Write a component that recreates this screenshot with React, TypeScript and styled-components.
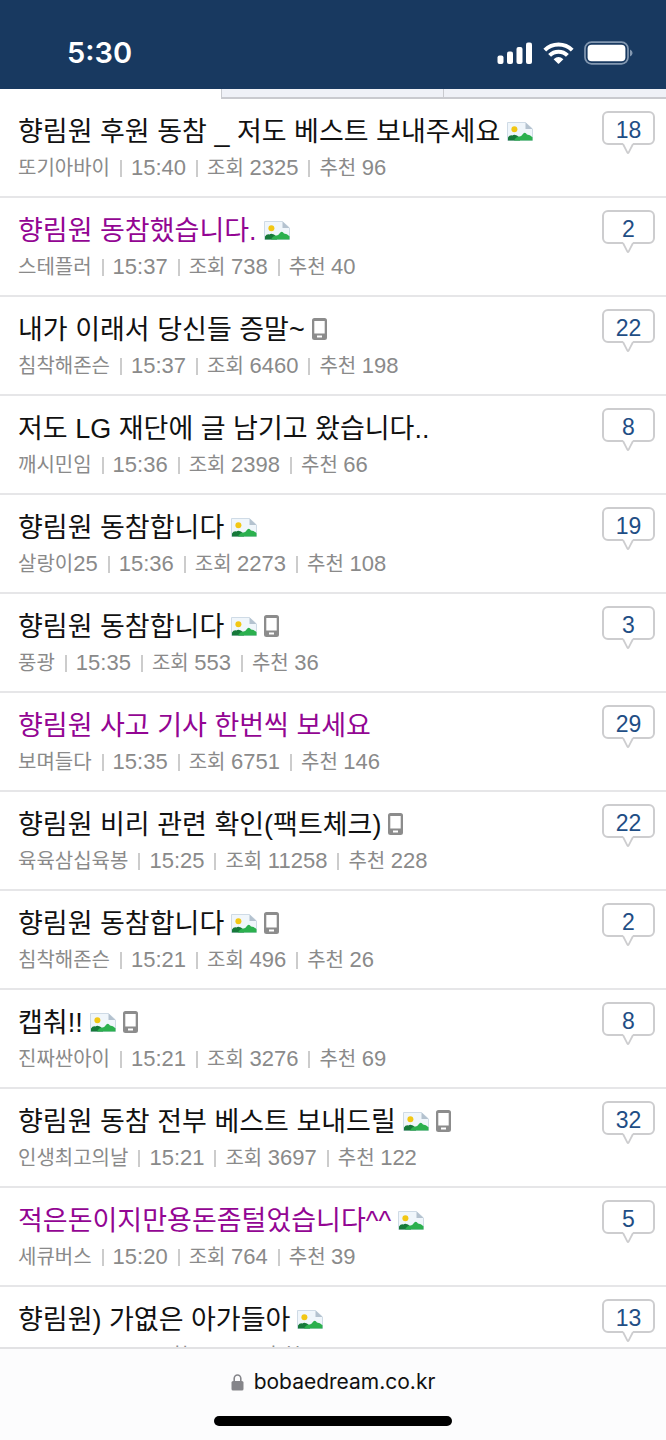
import React from "react";
import styled, { createGlobalStyle } from "styled-components";

const GlobalStyle = createGlobalStyle`
  * { box-sizing: border-box; }
  body {
    margin: 0;
    background: #fff;
    font-family: "Liberation Sans", "Noto Sans CJK KR", sans-serif;
  }
`;

const Page = styled.div`
  display: flex;
  flex-direction: column;
  height: 100vh;
`;

const StatusBar = styled.header`
  flex: none;
  display: flex;
  align-items: center;
  justify-content: space-between;
  padding: 34px 33px 17px 67px;
  background: #183960;
  color: #fff;
`;

const Clock = styled.time`
  font: 600 29px/38px Inter, sans-serif;
`;

const StatusIcons = styled.div`
  display: flex;
  align-items: center;
  gap: 10px;
`;

const Scroller = styled.main`
  flex: 1;
  min-height: 0;
  overflow-y: auto;
  scrollbar-width: none;
`;

const TabEdge = styled.div`
  display: grid;
  grid-template-columns: repeat(3, 1fr);
  height: 10px;
`;

const Tab = styled.div<{ $active?: boolean }>`
  margin-left: -1px;
  background: ${(p) => (p.$active ? "#fff" : "#eff1f7")};
  border: solid #c9cacf;
  border-width: ${(p) => (p.$active ? "0" : "0 0 2px 1px")};
`;

const List = styled.ul`
  margin: 0;
  padding: 0;
  list-style: none;
`;

const Row = styled.li`
  display: flex;
  align-items: flex-start;
  justify-content: space-between;
  height: 99px;
  padding: 12px 11px 0 18px;
  border-bottom: 2px solid #e6e6e8;
`;

const Post = styled.div`
  min-width: 0;
  padding-top: 1px;
  white-space: nowrap;
`;

const Title = styled.a<{ $visited?: boolean }>`
  display: flex;
  align-items: center;
  gap: 7px;
  font-size: 27px;
  line-height: 40px;
  color: ${(p) => (p.$visited ? "#930593" : "#111")};
  text-decoration: none;
`;

const Badges = styled.span`
  display: flex;
  align-items: center;
  gap: 7px;
  padding-bottom: 2px;
`;

const Meta = styled.div`
  display: flex;
  align-items: center;
  font-size: 20px;
  line-height: 32px;
  color: #8a8a8a;
`;

const Figure = styled.span`
  font-size: 22px;
`;

const Label = styled.span`
  white-space: pre;
`;

const Bar = styled.span`
  width: 2px;
  height: 17px;
  margin: 0 9px 0 10px;
  background: #ccc;
`;

const Replies = styled.a`
  position: relative;
  flex: none;
  width: 53px;
  height: 34px;
  border: 2px solid #cdcdcf;
  border-radius: 6px;
  background: #fff;
  color: #1f4e85;
  font-size: 23px;
  line-height: 34px;
  text-align: center;
  text-decoration: none;
`;

const Tail = styled.svg`
  position: absolute;
  top: 30px;
  left: 18px;
`;

const AddressBar = styled.footer`
  flex: none;
  display: flex;
  flex-direction: column;
  align-items: center;
  padding: 18px 0 14px;
  border-top: 2px solid #e2e2e4;
  background: #fcfcfd;
`;

const Address = styled.a`
  display: flex;
  align-items: center;
  gap: 10px;
  font: 400 21px/30px Inter, sans-serif;
  color: #111;
  text-decoration: none;
`;

const HomeIndicator = styled.div`
  width: 238px;
  height: 10px;
  margin-top: 19px;
  border-radius: 5px;
  background: #000;
`;

const SignalIcon = () => (
  <svg width="36" height="22" viewBox="0 0 36 22" fill="#fff" aria-hidden="true">
    <rect x="0.5" y="13.5" width="6" height="8.5" rx="2" />
    <rect x="10" y="9.5" width="6" height="12.5" rx="2" />
    <rect x="19.5" y="5" width="6" height="17" rx="2" />
    <rect x="29" y="0.5" width="6" height="21.5" rx="2" />
  </svg>
);

const WifiIcon = () => (
  <svg width="31" height="22" viewBox="0 0 31 22" aria-hidden="true">
    <g fill="none" stroke="#fff" strokeWidth="4">
      <path d="M1.8 8.1A19.5 19.5 0 0 1 29.2 8.1" />
      <path d="M6.6 13.4A12.4 12.4 0 0 1 24.4 13.4" />
    </g>
    <path d="M10.6 17.2Q15.5 13 20.4 17.2L16.1 21.4Q15.5 22 14.9 21.4Z" fill="#fff" />
  </svg>
);

const BatteryIcon = () => (
  <svg width="49" height="24" viewBox="0 0 49 24" aria-hidden="true">
    <rect x="1" y="1.2" width="43" height="21.6" rx="6.5" fill="none" stroke="#8398b1" strokeWidth="1.7" />
    <rect x="3.6" y="3.8" width="37.8" height="16.4" rx="4" fill="#fff" />
    <path d="M46 8.5Q48.6 9.6 48.6 12T46 15.5Z" fill="#8398b1" />
  </svg>
);

const PhotoIcon = () => (
  <svg width="26" height="19" viewBox="0 0 26 19" role="img" aria-label="사진">
    <path d="M.5.5H18.5L25.5 7V18.5H.5Z" fill="#f0f6fb" stroke="#cfdbe6" />
    <path d="M18.5.5L25.5 7H18.5Z" fill="#b4c2cf" />
    <circle cx="7.4" cy="7.2" r="3" fill="#f2c714" />
    <path d="M1 15.4Q2.6 12.8 5.4 13.4Q8.4 11.4 13 16V18.6H1Z" fill="#16793a" />
    <path d="M7 18.6Q9 14.6 12.5 14.6Q14.5 14.2 16.6 11.2Q18.3 9.8 20 12.4Q23 12.4 25.5 15.2V18.6Z" fill="#2bb04e" />
  </svg>
);

const PhoneIcon = () => (
  <svg width="15" height="22" viewBox="0 0 15 22" role="img" aria-label="모바일">
    <path
      fillRule="evenodd"
      fill="#8c8c8c"
      d="M2.5 0H12.5A2.5 2.5 0 0 1 15 2.5V19.5A2.5 2.5 0 0 1 12.5 22H2.5A2.5 2.5 0 0 1 0 19.5V2.5A2.5 2.5 0 0 1 2.5 0ZM2.3 3V15.6H12.7V3ZM5 17.4V19.6H10V17.4Z"
    />
  </svg>
);

const LockIcon = () => (
  <svg width="13" height="17" viewBox="0 0 12 17" aria-hidden="true">
    <path d="M2.7 8V4.6A3.3 3.6 0 0 1 9.3 4.6V8" fill="none" stroke="#85858a" strokeWidth="1.6" />
    <rect y="7" width="12" height="9.6" rx="1.6" fill="#85858a" />
  </svg>
);

type Item = {
  title: string;
  author: string;
  time: string;
  views: number;
  likes: number;
  replies: number;
  photo?: boolean;
  mobile?: boolean;
  visited?: boolean;
};

const items: Item[] = [
  { title: "향림원 후원 동참 _ 저도 베스트 보내주세요", author: "또기아바이", time: "15:40", views: 2325, likes: 96, replies: 18, photo: true },
  { title: "향림원 동참했습니다.", author: "스테플러", time: "15:37", views: 738, likes: 40, replies: 2, photo: true, visited: true },
  { title: "내가 이래서 당신들 증말~", author: "침착해존슨", time: "15:37", views: 6460, likes: 198, replies: 22, mobile: true },
  { title: "저도 LG 재단에 글 남기고 왔습니다..", author: "깨시민임", time: "15:36", views: 2398, likes: 66, replies: 8 },
  { title: "향림원 동참합니다", author: "살랑이25", time: "15:36", views: 2273, likes: 108, replies: 19, photo: true },
  { title: "향림원 동참합니다", author: "풍광", time: "15:35", views: 553, likes: 36, replies: 3, photo: true, mobile: true },
  { title: "향림원 사고 기사 한번씩 보세요", author: "보며들다", time: "15:35", views: 6751, likes: 146, replies: 29, visited: true },
  { title: "향림원 비리 관련 확인(팩트체크)", author: "육육삼십육봉", time: "15:25", views: 11258, likes: 228, replies: 22, mobile: true },
  { title: "향림원 동참합니다", author: "침착해존슨", time: "15:21", views: 496, likes: 26, replies: 2, photo: true, mobile: true },
  { title: "캡춰!!", author: "진짜싼아이", time: "15:21", views: 3276, likes: 69, replies: 8, photo: true, mobile: true },
  { title: "향림원 동참 전부 베스트 보내드릴", author: "인생최고의날", time: "15:21", views: 3697, likes: 122, replies: 32, photo: true, mobile: true },
  { title: "적은돈이지만용돈좀털었습니다^^", author: "세큐버스", time: "15:20", views: 764, likes: 39, replies: 5, photo: true, visited: true },
  { title: "향림원) 가엾은 아가들아", author: "오토", time: "15:20", views: 2000, likes: 100, replies: 13, photo: true },
];

// Digits inside an author's name are set at the same size as the other figures.
const AuthorName = ({ name }: { name: string }) => (
  <span>
    {name.split(/(\d+)/).map((part, i) => (i % 2 ? <Figure key={i}>{part}</Figure> : part))}
  </span>
);

const PostRow = ({ item }: { item: Item }) => (
  <Row>
    <Post>
      <Title href="#" $visited={item.visited}>
        {item.title}
        <Badges>
          {item.photo && <PhotoIcon />}
          {item.mobile && <PhoneIcon />}
        </Badges>
      </Title>
      <Meta>
        <AuthorName name={item.author} />
        <Bar />
        <Figure as="time">{item.time}</Figure>
        <Bar />
        <Label>조회 </Label>
        <Figure>{item.views}</Figure>
        <Bar />
        <Label>추천 </Label>
        <Figure>{item.likes}</Figure>
      </Meta>
    </Post>
    <Replies href="#">
      {item.replies}
      <Tail width="12" height="12" viewBox="0 0 12 12" aria-hidden="true">
        <path d="M1 0H11V1L6.6 9.6Q6 10.6 5.4 9.6L1 1Z" fill="#fff" />
        <path d="M1 1L5.4 9.6Q6 10.6 6.6 9.6L11 1" fill="none" stroke="#cdcdcf" strokeWidth="1.8" />
      </Tail>
    </Replies>
  </Row>
);

export default function App() {
  return (
    <Page>
      <GlobalStyle />
      <StatusBar>
        <Clock>5:30</Clock>
        <StatusIcons>
          <SignalIcon />
          <WifiIcon />
          <BatteryIcon />
        </StatusIcons>
      </StatusBar>
      <Scroller>
        <TabEdge>
          <Tab $active />
          <Tab />
          <Tab />
        </TabEdge>
        <List>
          {items.map((item, i) => (
            <PostRow key={i} item={item} />
          ))}
        </List>
      </Scroller>
      <AddressBar>
        <Address href="#">
          <LockIcon />
          bobaedream.co.kr
        </Address>
        <HomeIndicator />
      </AddressBar>
    </Page>
  );
}
